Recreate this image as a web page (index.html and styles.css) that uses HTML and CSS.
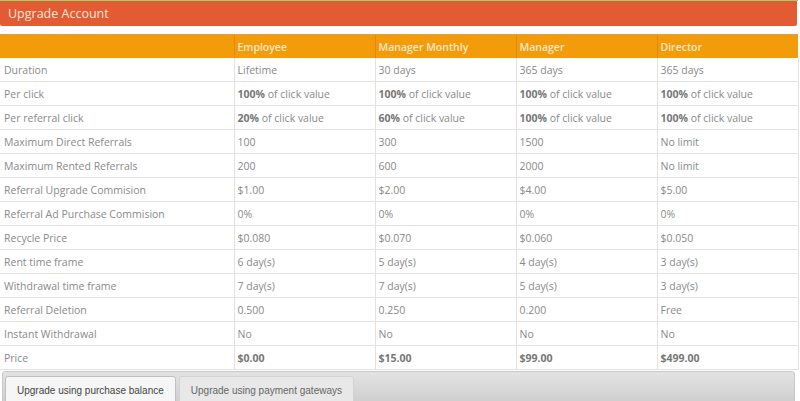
FILE: index.html
```html
<!DOCTYPE html>
<html>
<head>
<meta charset="utf-8">
<link rel="stylesheet" href="styles.css">
</head>
<body>
<div class="page">
  <div class="title">Upgrade Account</div>
  <table class="plans">
    <colgroup>
      <col class="c-label"><col class="c-plan"><col class="c-plan"><col class="c-plan"><col class="c-plan">
    </colgroup>
    <thead>
      <tr><th></th><th>Employee</th><th>Manager Monthly</th><th>Manager</th><th>Director</th></tr>
    </thead>
    <tbody>
      <tr><td>Duration</td><td>Lifetime</td><td>30 days</td><td>365 days</td><td>365 days</td></tr>
      <tr><td>Per click</td><td><b>100%</b> of click value</td><td><b>100%</b> of click value</td><td><b>100%</b> of click value</td><td><b>100%</b> of click value</td></tr>
      <tr><td>Per referral click</td><td><b>20%</b> of click value</td><td><b>60%</b> of click value</td><td><b>100%</b> of click value</td><td><b>100%</b> of click value</td></tr>
      <tr><td>Maximum Direct Referrals</td><td>100</td><td>300</td><td>1500</td><td>No limit</td></tr>
      <tr><td>Maximum Rented Referrals</td><td>200</td><td>600</td><td>2000</td><td>No limit</td></tr>
      <tr><td>Referral Upgrade Commision</td><td>$1.00</td><td>$2.00</td><td>$4.00</td><td>$5.00</td></tr>
      <tr><td>Referral Ad Purchase Commision</td><td>0%</td><td>0%</td><td>0%</td><td>0%</td></tr>
      <tr><td>Recycle Price</td><td>$0.080</td><td>$0.070</td><td>$0.060</td><td>$0.050</td></tr>
      <tr><td>Rent time frame</td><td>6 day(s)</td><td>5 day(s)</td><td>4 day(s)</td><td>3 day(s)</td></tr>
      <tr><td>Withdrawal time frame</td><td>7 day(s)</td><td>7 day(s)</td><td>5 day(s)</td><td>3 day(s)</td></tr>
      <tr><td>Referral Deletion</td><td>0.500</td><td>0.250</td><td>0.200</td><td>Free</td></tr>
      <tr><td>Instant Withdrawal</td><td>No</td><td>No</td><td>No</td><td>No</td></tr>
      <tr><td>Price</td><td><b>$0.00</b></td><td><b>$15.00</b></td><td><b>$99.00</b></td><td><b>$499.00</b></td></tr>
    </tbody>
  </table>
  <div class="tabs">
    <div class="tab active">Upgrade using purchase balance</div>
    <div class="tab">Upgrade using payment gateways</div>
  </div>
</div>
</body>
</html>
```

FILE: styles.css
```css
html, body {
  margin: 0;
  padding: 0;
  background: #fff;
  height: 401px;
  overflow: hidden;
}
.page {
  width: 798px;
  border-top: 1px solid #9fd069;
  font-family: "Open Sans", "Liberation Sans", sans-serif;
}
.title {
  height: 25px;
  width: 797px;
  background: #e35b32;
  color: #fbe6dc;
  font-family: "Open Sans", sans-serif;
  font-size: 12.5px;
  line-height: 25px;
  padding-left: 8px;
  box-sizing: border-box;
  border-radius: 0 0 2px 2px;
  margin-bottom: 8px;
}
.plans {
  width: 798px;
  border-collapse: collapse;
  table-layout: fixed;
  font-size: 10.5px;
  color: #8a8a8a;
}
.c-label { width: 234px; }
.c-plan { width: 141px; }
.plans th {
  background: #f29c0b;
  color: #fde7c7;
  font-weight: 600;
  text-align: left;
  height: 23px;
  padding: 0 3px;
  border-left: 1px solid #e08a05;
  border-top: 1px solid #e8a040;
}
.plans th:first-child { border-left: none; }
.plans td {
  height: 23px;
  padding: 0 3px;
  border-left: 1px solid #e2e2e2;
  border-bottom: 1px solid #e2e2e2;
  white-space: nowrap;
}
.plans td:first-child { border-left: none; padding-left: 4px; }
.plans td:last-child { border-right: 1px solid #e2e2e2; }
.plans b { color: #777; font-weight: 700; }
.tabs {
  margin: 1px 0 0 2px;
  width: 793px;
  height: 40px;
  border: 1px solid #c8c8c8;
  border-radius: 3px;
  background: linear-gradient(#e3e3e3, #c9c9c9);
  display: flex;
  gap: 3px;
  padding: 4px 0 0 2px;
  box-sizing: border-box;
}
.tab {
  font-family: "Liberation Sans", Arial, sans-serif;
  font-size: 10px;
  padding: 0 11px;
  height: 30px;
  line-height: 27px;
  border: 1px solid #d3d3d3;
  border-radius: 3px 3px 0 0;
  background: #e8e8e8;
  color: #666;
}
.tab.active {
  background: #f6f6f6;
  border-color: #c0c0c0;
  color: #444;
}
```
